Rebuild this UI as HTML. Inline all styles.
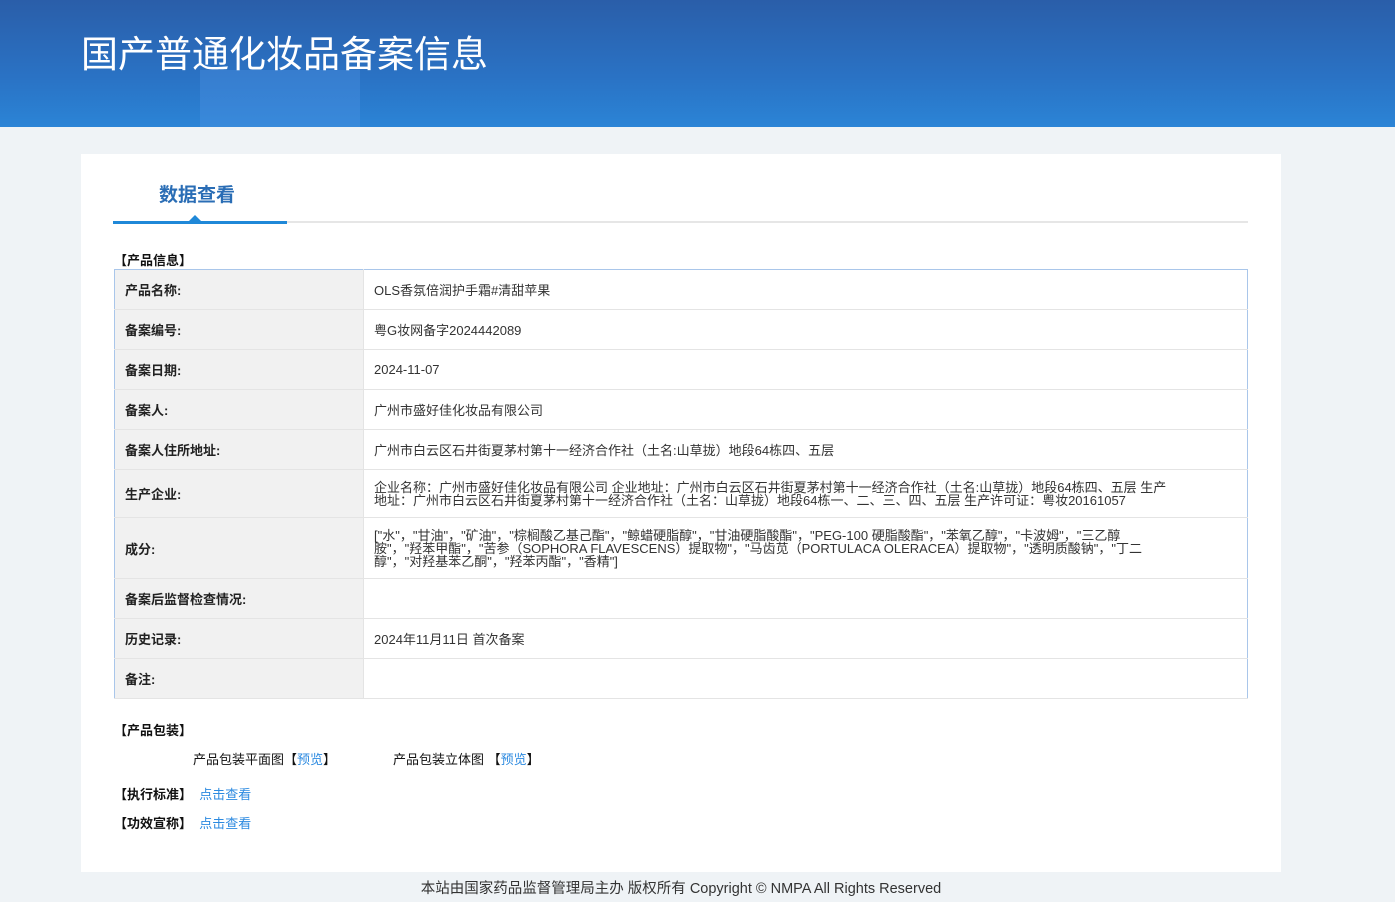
<!DOCTYPE html>
<html><head><meta charset="utf-8"><style>
*{margin:0;padding:0;box-sizing:border-box}
body{width:1395px;height:902px;background:#eff3f6;font-family:"Liberation Sans","Noto Sans CJK SC",sans-serif;color:#333;position:relative;overflow:hidden}
.hd{position:absolute;left:0;top:0;width:1395px;height:127px;background:linear-gradient(180deg,#2a5ea9 0%,#2a72c4 60%,#2b84d6 100%);overflow:hidden}
.hd .s1{position:absolute;left:200px;top:70px;width:160px;height:80px;background:rgba(80,150,230,.35)}
.hd h1{position:absolute;left:81px;top:24px;font-size:37px;font-weight:normal;color:#fff;letter-spacing:0}
.card{position:absolute;left:81px;top:154px;width:1200px;height:718px;background:#fff}
.tab{position:absolute;left:78px;top:26px;font-size:19px;font-weight:bold;color:#2a6db5}
.line{position:absolute;left:32px;top:67px;width:1135px;height:2px;background:#e6e6e6}
.line2{position:absolute;left:32px;top:67px;width:174px;height:3px;background:#1f88d8}
.tri{position:absolute;left:108px;top:61px;width:0;height:0;border-left:6px solid transparent;border-right:6px solid transparent;border-bottom:6px solid #1f88d8}
.sec{position:absolute;font-size:13px;font-weight:bold;color:#111}
table{position:absolute;left:33px;top:115px;width:1134px;border-collapse:collapse;border:1px solid #a9c6ea;font-size:13px}
td{border:1px solid #e4e4e4;height:40px;vertical-align:middle}
table tr:first-child td{border-top:1px solid #a9c6ea}
td.l{width:249px;background:#f1f1f1;font-weight:bold;padding-left:10px;color:#222;border-left:1px solid #a9c6ea}
td.v{padding-left:10px;color:#333;border-right:1px solid #a9c6ea}
td.v div{width:805px;line-height:13px}
.a{color:#2c8ae0}
.t{position:absolute;font-size:13px;color:#111}
.ft{position:absolute;left:0;top:877px;width:1362px;text-align:center;font-size:14.5px;color:#333}
</style></head><body>
<div class="hd"><div class="s1"></div><h1>国产普通化妆品备案信息</h1></div>
<div class="card">
<div class="tab">数据查看</div>
<div class="line"></div><div class="line2"></div><div class="tri"></div>
<div class="sec" style="left:33px;top:96px">【产品信息】</div>
<table>
<tr><td class="l">产品名称:</td><td class="v">OLS香氛倍润护手霜#清甜苹果</td></tr>
<tr><td class="l">备案编号:</td><td class="v">粤G妆网备字2024442089</td></tr>
<tr><td class="l">备案日期:</td><td class="v">2024-11-07</td></tr>
<tr><td class="l">备案人:</td><td class="v">广州市盛好佳化妆品有限公司</td></tr>
<tr><td class="l">备案人住所地址:</td><td class="v">广州市白云区石井街夏茅村第十一经济合作社（土名:山草拢）地段64栋四、五层</td></tr>
<tr><td class="l" style="height:48px">生产企业:</td><td class="v"><div>企业名称：广州市盛好佳化妆品有限公司 企业地址：广州市白云区石井街夏茅村第十一经济合作社（土名:山草拢）地段64栋四、五层 生产<br>地址：广州市白云区石井街夏茅村第十一经济合作社（土名：山草拢）地段64栋一、二、三、四、五层 生产许可证：粤妆20161057</div></td></tr>
<tr><td class="l" style="height:61px">成分:</td><td class="v"><div>["水"，"甘油"，"矿油"，"棕榈酸乙基己酯"，"鲸蜡硬脂醇"，"甘油硬脂酸酯"，"PEG-100 硬脂酸酯"，"苯氧乙醇"，"卡波姆"，"三乙醇<br>胺"，"羟苯甲酯"，"苦参（SOPHORA FLAVESCENS）提取物"，"马齿苋（PORTULACA OLERACEA）提取物"，"透明质酸钠"，"丁二<br>醇"，"对羟基苯乙酮"，"羟苯丙酯"，"香精"]</div></td></tr>
<tr><td class="l">备案后监督检查情况:</td><td class="v"></td></tr>
<tr><td class="l">历史记录:</td><td class="v">2024年11月11日 首次备案</td></tr>
<tr><td class="l">备注:</td><td class="v"></td></tr>
</table>
<div class="sec" style="left:33px;top:566px">【产品包装】</div>
<div class="t" style="left:112px;top:595px">产品包装平面图【<span class="a">预览</span>】</div>
<div class="t" style="left:312px;top:595px">产品包装立体图 【<span class="a">预览</span>】</div>
<div class="sec" style="left:33px;top:630px">【执行标准】 &nbsp;<span class="a" style="font-weight:normal">点击查看</span></div>
<div class="sec" style="left:33px;top:659px">【功效宣称】 &nbsp;<span class="a" style="font-weight:normal">点击查看</span></div>
</div>
<div class="ft">本站由国家药品监督管理局主办 版权所有 Copyright © NMPA All Rights Reserved</div>
</body></html>
